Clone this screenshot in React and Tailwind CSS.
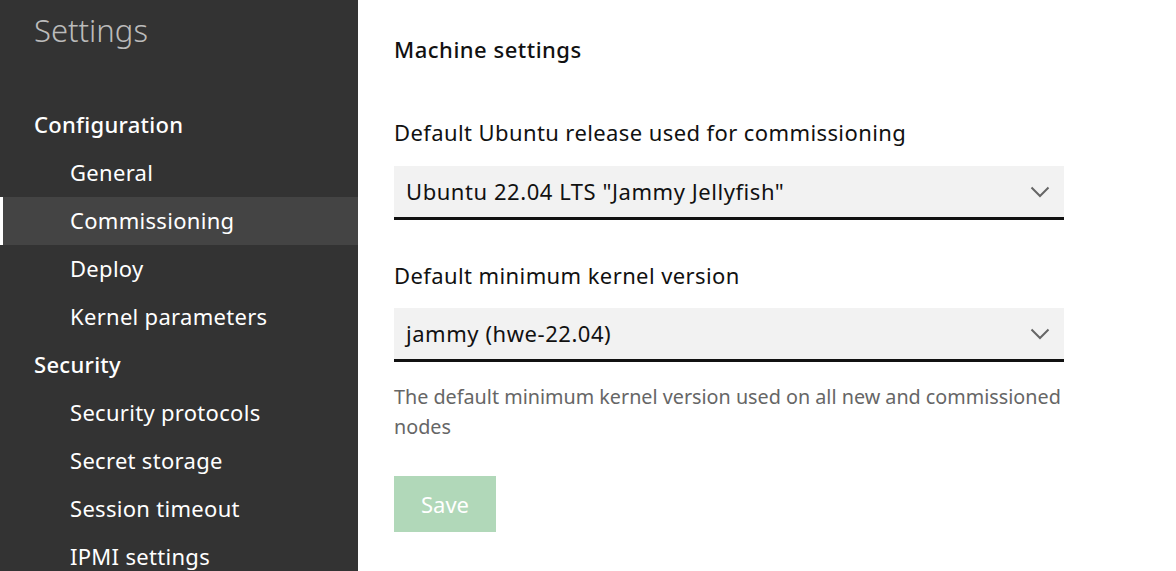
const font = { fontFamily: '"Noto Sans", "Open Sans", sans-serif' };

const sections = [
  {
    title: "Configuration",
    items: ["General", "Commissioning", "Deploy", "Kernel parameters"],
  },
  {
    title: "Security",
    items: ["Security protocols", "Secret storage", "Session timeout", "IPMI settings"],
  },
];

const Chevron = () => (
  <svg width="20" height="12" viewBox="0 0 20 12" fill="none">
    <polyline points="1.5,1.5 10,10 18.5,1.5" stroke="#666" strokeWidth="2" />
  </svg>
);

const Select = ({ value }) => (
  <div className="flex items-center justify-between w-[670px] h-[54px] bg-[#f2f2f2] border-b-[3px] border-[#111] pl-3 pr-[14px]">
    <span className="text-[22px] tracking-[0.55px] text-[#111]">{value}</span>
    <Chevron />
  </div>
);

export default function App() {
  return (
    <div className="flex w-full h-[571px] overflow-hidden bg-white" style={font}>
      <aside className="w-[358px] shrink-0 bg-[#333] text-white">
        <h1 className="pl-[34px] pt-[7px] h-[101px] text-[31px] font-light text-[#bbb]">
          Settings
        </h1>
        {sections.map((section) => (
          <div key={section.title}>
            <div className="h-12 flex items-center pb-[1px] pl-[34px] text-[22px] tracking-[0.3px] font-medium">
              {section.title}
            </div>
            {section.items.map((item) => {
              const active = item === "Commissioning";
              return (
                <div
                  key={item}
                  className={
                    active
                      ? "h-12 flex items-center pb-[2px] pl-[67px] text-[22px] tracking-[0.3px] bg-[#444] border-l-[3px] border-white"
                      : "h-12 flex items-center pb-[2px] pl-[70px] text-[22px] tracking-[0.3px]"
                  }
                >
                  {item}
                </div>
              );
            })}
          </div>
        ))}
      </aside>

      <main className="flex-1 pl-[36px] pt-[34px]">
        <h2 className="text-[22px] tracking-[0.5px] font-medium text-[#111] h-[30px] leading-[30px]">
          Machine settings
        </h2>
        <div className="mt-[53px] text-[22px] tracking-[0.4px] text-[#111] leading-[30px]">
          Default Ubuntu release used for commissioning
        </div>
        <div className="mt-[19px]">
          <Select value={'Ubuntu 22.04 LTS "Jammy Jellyfish"'} />
        </div>
        <div className="mt-[40px] text-[22px] tracking-[0.4px] text-[#111] leading-[30px]">
          Default minimum kernel version
        </div>
        <div className="mt-[18px]">
          <Select value="jammy (hwe-22.04)" />
        </div>
        <p className="mt-[20px] w-[672px] text-[19.75px] leading-[30px] text-[#666]">
          The default minimum kernel version used on all new and commissioned nodes
        </p>
        <button className="mt-[34px] h-14 w-[102px] bg-[#b1d8b9] text-white text-[22px]">
          Save
        </button>
      </main>
    </div>
  );
}
